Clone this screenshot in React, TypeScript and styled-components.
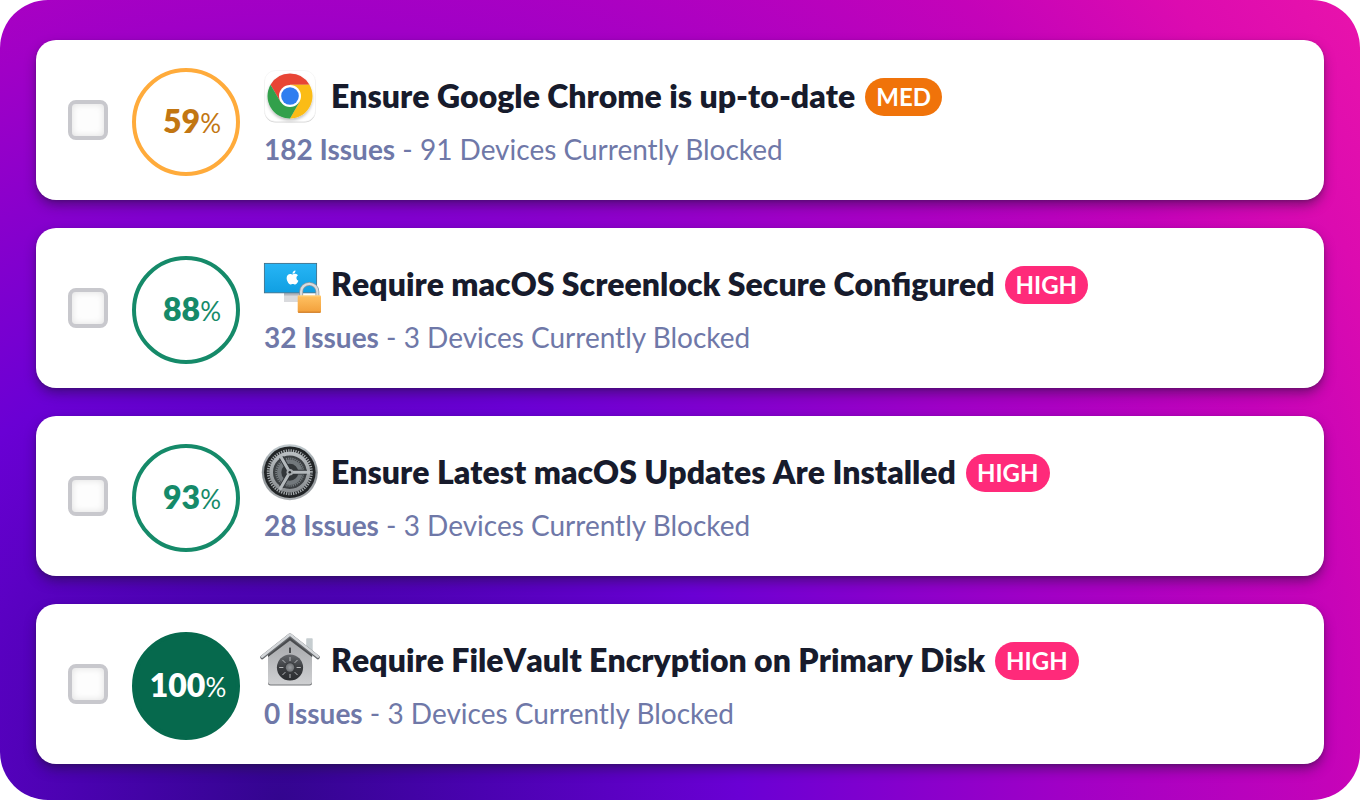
import React from "react";
import styled, { createGlobalStyle } from "styled-components";
import { FaApple } from "react-icons/fa";

const GlobalStyle = createGlobalStyle`
  *, *::before, *::after { box-sizing: border-box; }
  body { margin: 0; background: #fff; font-family: Lato, "Open Sans", sans-serif; }
`;

type Tone = "warn" | "good" | "done";
type Level = "MED" | "HIGH";

const tones: Record<Tone, { line: string; fill: string; text: string }> = {
  warn: { line: "#ffab3b", fill: "#fff", text: "#c27612" },
  good: { line: "#158a69", fill: "#fff", text: "#158a69" },
  done: { line: "#06694d", fill: "#06694d", text: "#fff" },
};

const Stage = styled.main`
  min-height: 100vh;
  padding: 40px 36px 36px;
  border-radius: 48px;
  background: radial-gradient(
    circle at 280px 100%,
    #33058f 0,
    #4a02b0 200px,
    #6a00d4 460px,
    #a000c6 780px,
    #c403b9 1050px,
    #dc0bb0 1200px,
    #ec15aa 1380px
  );
`;

const List = styled.ul`
  display: flex;
  flex-direction: column;
  gap: 28px;
  margin: 0;
  padding: 0;
  list-style: none;
`;

const Card = styled.li`
  display: flex;
  align-items: center;
  padding: 28px 32px 24px;
  border-radius: 20px;
  background: #fff;
  box-shadow: 0 6px 12px -1px rgba(30, 20, 50, 0.5), 0 1px 3px rgba(30, 20, 50, 0.2);
`;

const Check = styled.input`
  appearance: none;
  flex: none;
  width: 40px;
  height: 40px;
  margin: 0 24px 4px 0;
  border: 4px solid #c8c8cd;
  border-radius: 8px;
  background: #fdfdfd;
  box-shadow: inset 0 0 7px rgba(0, 0, 0, 0.12);
  cursor: pointer;

  &:checked { background: #158a69; }
`;

const Ring = styled.div<{ $tone: Tone }>`
  display: flex;
  flex: none;
  align-items: center;
  justify-content: center;
  width: 108px;
  height: 108px;
  margin-right: 20px;
  padding-left: ${(p) => (p.$tone === "done" ? 4 : 12)}px;
  border: 4px solid ${(p) => tones[p.$tone].line};
  border-radius: 50%;
  background: ${(p) => tones[p.$tone].fill};
  color: ${(p) => tones[p.$tone].text};
`;

const Score = styled.span`
  font-size: 26px;
  line-height: 40px;
`;

const ScoreValue = styled.b`
  font-size: 32px;
  font-weight: 800;
`;

const Body = styled.div`
  flex: 1;
  min-width: 0;
  align-self: flex-start;
`;

const Heading = styled.div`
  display: flex;
  align-items: center;
  min-height: 56px;
`;

const Icon = styled.svg`
  flex: none;
  width: 60px;
  height: 56px;
  margin-right: 11px;
  overflow: visible;
`;

const Title = styled.label<{ $ligatures: boolean }>`
  color: #171b2c;
  font-size: 32px;
  font-weight: 800;
  font-kerning: none;
  font-variant-ligatures: ${(p) => (p.$ligatures ? "normal" : "none")};
  line-height: 40px;
  cursor: pointer;
`;

const Badge = styled.span<{ $level: Level }>`
  flex: none;
  margin: 2px 0 0 10px;
  padding: 0 11px;
  border-radius: 19px;
  background: ${(p) => (p.$level === "MED" ? "#f0730a" : "#ff2a7a")};
  color: #fff;
  font-size: 24px;
  font-weight: 700;
  line-height: 38px;
`;

const Detail = styled.p`
  margin: 8px 0 0;
  padding-left: 4px;
  color: #6f78a8;
  font-size: 28px;
  line-height: 34px;
`;

const Count = styled.strong`
  font-weight: 700;
`;

const ChromeIcon = () => (
  <Icon viewBox="0 0 60 56" aria-hidden="true">
    <defs>
      <filter id="chromeShade" x="-20%" y="-20%" width="140%" height="150%">
        <feDropShadow dx="0" dy="2" stdDeviation="1.5" floodOpacity="0.25" />
      </filter>
    </defs>
    <rect x="4.5" y="3.5" width="51" height="51" rx="11" fill="#d4d4d4" />
    <rect x="4.5" y="2.5" width="51" height="51" rx="11" fill="#fff" stroke="#f1f1f1" strokeWidth="0.6" />
    <g filter="url(#chromeShade)">
      <path d="M10.5 16.8A22.5 22.5 0 0 1 49.5 16.8H30L20.3 33.6Z" fill="#e84436" />
      <path d="M49.5 16.8A22.5 22.5 0 0 1 30 50.5L39.7 33.6L30 16.8Z" fill="#fbbc16" />
      <path d="M10.5 16.8A22.5 22.5 0 0 0 30 50.5L39.7 33.6H20.3Z" fill="#31a04c" />
    </g>
    <circle cx="30" cy="28" r="11" fill="#fff" />
    <circle cx="30" cy="28" r="8.8" fill="#2f7ef0" />
  </Icon>
);

const ScreenLockIcon = () => (
  <Icon viewBox="0 0 60 56" aria-hidden="true">
    <defs>
      <linearGradient id="screen" x1="0" y1="0" x2="0" y2="1">
        <stop offset="0" stopColor="#27b5f5" />
        <stop offset="1" stopColor="#109fe2" />
      </linearGradient>
      <linearGradient id="lockBody" x1="0" y1="0" x2="0" y2="1">
        <stop offset="0" stopColor="#ffc263" />
        <stop offset="1" stopColor="#f29f3a" />
      </linearGradient>
    </defs>
    <path d="M24 37H41V46H24Z" fill="#d9dadd" />
    <path d="M24 37H41V39.5H24Z" fill="#b3b6bc" />
    <rect x="4.4" y="7.4" width="52.2" height="29.4" fill="url(#screen)" stroke="#3c708b" strokeWidth="0.9" />
    <FaApple x={24.5} y={13.5} width={13} height={16} color="#fff" />
    <path d="M41.2 41V35.5A8.1 7.7 0 0 1 57.4 35.5V41" fill="none" stroke="#92989e" strokeWidth="3.8" />
    <path d="M41.2 41V35.5A8.1 7.7 0 0 1 57.4 35.5V41" fill="none" stroke="#d9dcdf" strokeWidth="2.3" />
    <rect x="37.7" y="39.4" width="23.3" height="17.4" rx="1.2" fill="url(#lockBody)" />
    <path d="M38.5 39.9H60.2" stroke="#ffda92" strokeWidth="0.9" />
    <path d="M38.2 56.2H60.5" stroke="#c97520" strokeWidth="1" />
  </Icon>
);

const GearIcon = () => (
  <Icon viewBox="0 0 60 56" aria-hidden="true">
    <defs>
      <linearGradient id="gearRim" x1="0" y1="0" x2="0" y2="1">
        <stop offset="0" stopColor="#c3ccd0" />
        <stop offset="0.5" stopColor="#8a9094" />
        <stop offset="1" stopColor="#a9adb0" />
      </linearGradient>
      <linearGradient id="gearMetal" x1="0" y1="0" x2="0" y2="1">
        <stop offset="0" stopColor="#b9bec1" />
        <stop offset="1" stopColor="#8b8f92" />
      </linearGradient>
    </defs>
    <circle cx="29.8" cy="28.2" r="28" fill="url(#gearRim)" />
    <circle cx="29.8" cy="28.2" r="25.8" fill="#212426" />
    <circle cx="29.8" cy="28.2" r="21.5" fill="none" stroke="#a4a9ac" strokeWidth="3" strokeDasharray="1.3 1.115" />
    <circle cx="29.8" cy="28.2" r="18.6" fill="#3c4043" stroke="url(#gearMetal)" strokeWidth="3.6" />
    <circle cx="29.8" cy="28.2" r="13.6" fill="none" stroke="#777d81" strokeWidth="2" strokeDasharray="1.2 0.936" />
    <circle cx="29.8" cy="28.2" r="10.6" fill="#33373a" stroke="#72787c" strokeWidth="4.2" />
    <g stroke="#303438" strokeWidth="4.8">
      <path d="M29.8 28.2H47M29.8 28.2L21.2 13.3M29.8 28.2L21.2 43.1" />
    </g>
    <g stroke="#b4b9bc" strokeWidth="3">
      <path d="M29.8 28.2H50M29.8 28.2L19.7 10.7M29.8 28.2L19.7 45.7" />
    </g>
    <circle cx="29.8" cy="28.2" r="3.3" fill="#a6abae" />
    <circle cx="29.8" cy="28.2" r="1.3" fill="#24272a" />
  </Icon>
);

const VaultIcon = () => (
  <Icon viewBox="0 0 60 56" aria-hidden="true">
    <defs>
      <linearGradient id="wall" x1="0" y1="0" x2="0" y2="1">
        <stop offset="0" stopColor="#a2a4a7" />
        <stop offset="1" stopColor="#cfd0d2" />
      </linearGradient>
      <linearGradient id="dial" x1="0" y1="0" x2="0" y2="1">
        <stop offset="0" stopColor="#66696d" />
        <stop offset="0.5" stopColor="#3b3d40" />
        <stop offset="1" stopColor="#2b2d30" />
      </linearGradient>
      <radialGradient id="knob">
        <stop offset="0" stopColor="#999b9e" />
        <stop offset="1" stopColor="#6f7275" />
      </radialGradient>
    </defs>
    <rect x="46.2" y="6.3" width="6.5" height="19" rx="0.8" fill="#c6cdd0" />
    <path d="M8 22L30 4L52 22V51Q52 53.5 49.5 53.5H10.5Q8 53.5 8 51Z" fill="#737578" />
    <path d="M8 22L30 4L52 22V50Q52 52.4 49.5 52.4H10.5Q8 52.4 8 50Z" fill="url(#wall)" />
    <path d="M8 25V21L30 3L52 21V25L30 8.5Z" fill="#4a4c4f" />
    <path d="M2.2 25.3L30 3.2L57.8 25.3" fill="none" stroke="#66696d" strokeWidth="4" strokeLinecap="round" strokeLinejoin="round" />
    <path d="M2.2 24.6L30 2.6L57.8 24.6" fill="none" stroke="#d3d6d9" strokeWidth="2.6" strokeLinecap="round" strokeLinejoin="round" />
    <rect x="29" y="15.5" width="2" height="5.5" rx="0.5" fill="#47494c" />
    <circle cx="30" cy="35.5" r="13.1" fill="url(#dial)" />
    <g stroke="#c3c5c7" strokeWidth="0.9">
      <path d="M30 25V29M30 42V46M19.2 35.5H23.4M36.6 35.5H40.8M22.4 27.9L25.4 30.9M37.6 27.9L34.6 30.9M22.4 43.1L25.4 40.1M37.6 43.1L34.6 40.1" />
    </g>
    <circle cx="30" cy="35.5" r="5.2" fill="#3a3c3f" />
    <circle cx="30" cy="35.5" r="4.2" fill="url(#knob)" />
  </Icon>
);

interface CheckItem {
  id: string;
  score: number;
  tone: Tone;
  icon: React.ReactNode;
  title: string;
  ligatures: boolean;
  level: Level;
  issues: number;
  blocked: number;
}

const items: CheckItem[] = [
  { id: "chrome", score: 59, tone: "warn", icon: <ChromeIcon />, title: "Ensure Google Chrome is up-to-date", ligatures: true, level: "MED", issues: 182, blocked: 91 },
  { id: "screenlock", score: 88, tone: "good", icon: <ScreenLockIcon />, title: "Require macOS Screenlock Secure Configured", ligatures: true, level: "HIGH", issues: 32, blocked: 3 },
  { id: "updates", score: 93, tone: "good", icon: <GearIcon />, title: "Ensure Latest macOS Updates Are Installed", ligatures: true, level: "HIGH", issues: 28, blocked: 3 },
  { id: "filevault", score: 100, tone: "done", icon: <VaultIcon />, title: "Require FileVault Encryption on Primary Disk", ligatures: false, level: "HIGH", issues: 0, blocked: 3 },
];

export default function App() {
  return (
    <>
      <GlobalStyle />
      <Stage>
        <List>
          {items.map((item) => (
            <Card key={item.id}>
              <Check type="checkbox" id={item.id} />
              <Ring $tone={item.tone}>
                <Score>
                  <ScoreValue>{item.score}</ScoreValue>%
                </Score>
              </Ring>
              <Body>
                <Heading>
                  {item.icon}
                  <Title htmlFor={item.id} $ligatures={item.ligatures}>{item.title}</Title>
                  <Badge $level={item.level}>{item.level}</Badge>
                </Heading>
                <Detail>
                  <Count>{item.issues} Issues</Count> - {item.blocked} Devices Currently Blocked
                </Detail>
              </Body>
            </Card>
          ))}
        </List>
      </Stage>
    </>
  );
}
